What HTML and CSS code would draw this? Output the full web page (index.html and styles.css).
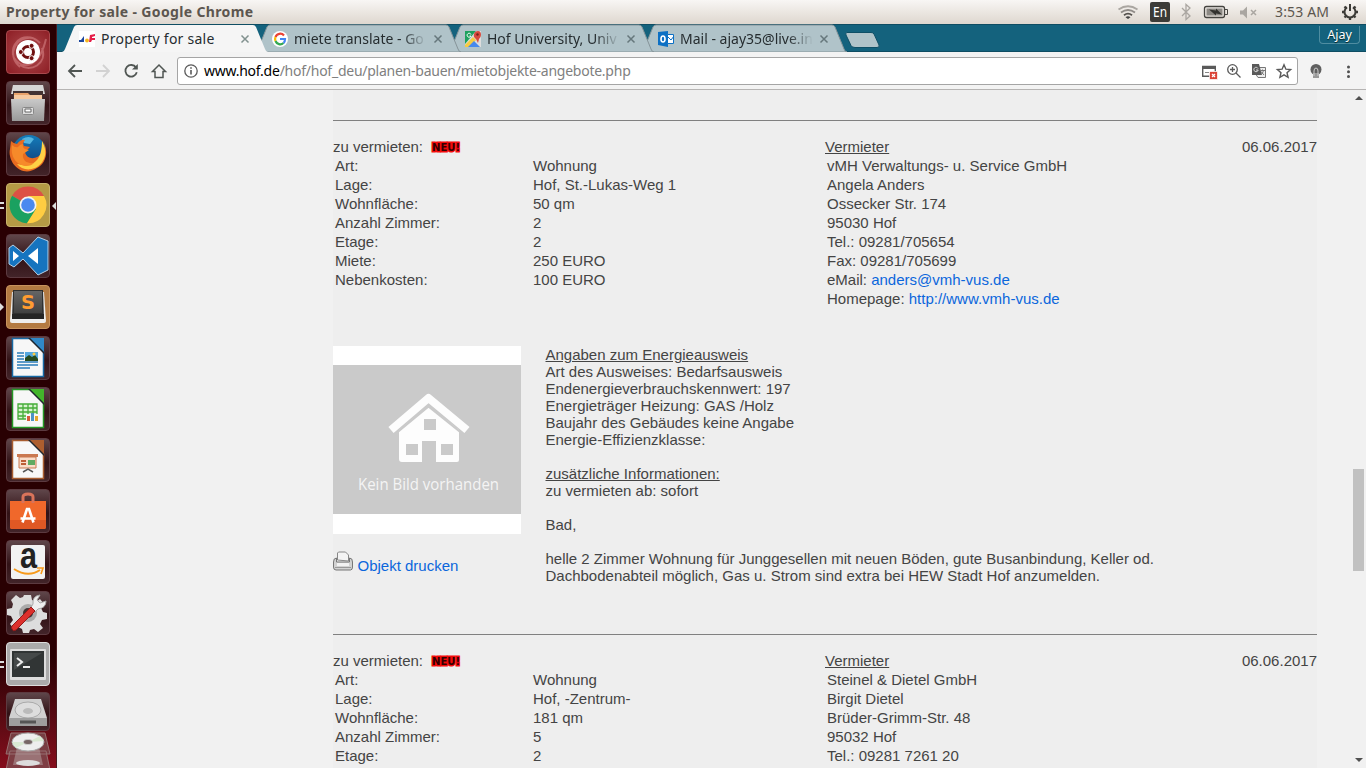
FILE: index.html
```html
<!DOCTYPE html>
<html lang="de">
<head>
<meta charset="utf-8">
<title>Property for sale</title>
<link rel="stylesheet" href="styles.css">
</head>
<body>
<header class="panel">
  <span class="panel-title">Property for sale - Google Chrome</span>
  <svg class="indicators" width="166" height="24" viewBox="1110 0 166 24">
    <g fill="none" stroke-width="1.8">
      <path d="M1118.500 9.500Q1128 3 1137.500 9.500" stroke="#aaa6a1"/><path d="M1121 12.500Q1128 7.500 1135 12.500" stroke="#8f8b87"/><path d="M1124 15.200Q1128 12 1132 15.200" stroke="#55524e"/>
    </g>
    <path d="M1125.500 17.200Q1128 15.500 1130.500 17.200L1128 19Z" fill="#444"/>
    <rect x="1150" y="2" width="20" height="20" rx="2" fill="#3c3b37"/>
    <text class="en" x="1153" y="17" textLength="14" lengthAdjust="spacingAndGlyphs">En</text>
    <path d="M1182 8l8 8-4 3.500V4.500l4 3.500-8 8" fill="none" stroke="#aaa6a1" stroke-width="1.300"/>
    <rect x="1204.500" y="6.500" width="20" height="11" rx="2" fill="none" stroke="#454440" stroke-width="1.300"/><path d="M1225 9.500h2.500v5H1225" fill="none" stroke="#454440"/>
    <rect x="1206.500" y="8.500" width="16" height="7" fill="#8b8883"/><path d="M1209 9.500l7 1 0-2 6 6-6-1v2Z" fill="#33322f"/>
    <path d="M1240 10.500h3l4-4v12l-4-4h-3Z" fill="#aaa6a1"/><path d="M1251 10l5 5m0-5l-5 5" stroke="#aaa6a1" stroke-width="1.500"/>
  </svg>
  <span class="clock">3:53 AM</span>
  <svg class="gear" width="20" height="20" viewBox="0 0 20 20"><g fill="none" stroke="#3c3b37"><path d="M7 5.300a5.500 5.500 0 1 0 6 0" stroke-width="2"/><path d="M10 2v7" stroke-width="2"/><path d="M4.500 4.500l2 2m9-2l-2 2M2 10h3m10 0h3M4.500 15.500l2-2m9 2l-2-2M10 15v3" stroke-width="2.300"/></g></svg>
</header>
<div class="desktop">
  <nav class="launcher">
    <div class="tile dash"><svg viewBox="0 0 44 44"><g fill="none" stroke="#df8f91" stroke-opacity=".5"><path d="M7 25C5 9 22 1 34 13M14 37C-1 24 11 5 27 8M40 9C34 35 18 42 8 28M36 18C42 34 24 43 14 35" stroke-width="2"/></g><circle cx="22" cy="22" r="12" fill="#fff"/><circle cx="22" cy="22" r="5.500" fill="none" stroke="#701010" stroke-width="3"/><g fill="#701010" stroke="#fff"><circle cx="14.800" cy="22" r="2.500"/><circle cx="25.600" cy="15.800" r="2.500"/><circle cx="25.600" cy="28.200" r="2.500"/></g></svg></div>
    <div class="tile"><svg viewBox="0 0 44 44"><path d="M7 4h30l2 9H5Z" fill="#d5d5d5"/><path d="M7 10h30v10H7Z" fill="#433"/><path d="M8 12h14l2 2h12v6H8Z" fill="#e9a26b"/><path d="M8 14h28v4H8Z" fill="#f6c9a0"/><path d="M5 18h34l-1 22H6Z" fill="url(#silver)"/><rect x="16.500" y="26.500" width="11" height="7" rx="1" fill="#ddd" stroke="#888"/><path d="M19 28h6v3h-6Z" fill="#fff" stroke="#666"/></svg></div>
    <div class="tile"><svg viewBox="0 0 44 44"><circle cx="23" cy="20" r="17" fill="url(#sea)"/><path d="M16 7q7-4 12 0l-4 5-6-1Z" fill="#55b5df"/><path d="M5 9Q8 12 11 12q4-5 8-4-3 3-1 6l6 1-5 5c2 9 13 7 17 1q5-7 0-13c7 9 5 23-5 28C15 47 1 29 4 17Z" fill="#e86b20"/><path d="M36 9c7 12 2 23-7 27-7 3-14 1-18-4 15 4 25-2 25-23Z" fill="#ffd145"/><path d="M6 13q3 3 6 2 2-3 5-3-1 3 2 5l4 1-6 4c-1 7 5 10 11 9-6 7-25 2-22-18Z" fill="#f68a2a"/></svg></div>
    <div class="tile chrome"><svg viewBox="0 0 44 44"><path d="M22 22L6.100 12.800A18.300 18.300 0 0 1 38 13H22Z" fill="#dd5144"/><path d="M22 22L6.100 12.800A18.300 18.300 0 0 0 21 40.300L30 26Z" fill="#1aa160"/><path d="M22 13h16A18.300 18.300 0 0 1 21 40.300L30 26Z" fill="#ffcd42"/><circle cx="22" cy="22" r="8.500" fill="#f3f3f3"/><circle cx="22" cy="22" r="6.800" fill="#4a89ef"/></svg><i class="pips"></i><i class="focus"></i></div>
    <div class="tile"><svg viewBox="0 0 44 44"><path d="M3 14l4-3 10 8L32 3l10 4v29l-10 5-15-16-9 8-5-3Z" fill="#1674bf" stroke="#b5d1e8"/><path d="M7 17v10l6-5ZM22 22l10-8v16Z" fill="#fff"/></svg></div>
    <div class="tile sublime"><svg viewBox="0 0 44 44"><path d="M6 7h32l2 29q0 2-2 2H6q-2 0-2-2Z" fill="#eee"/><path d="M7 5h30l1 29H6Z" fill="#303030"/><path d="M8 6h28v22H8Z" fill="url(#key)"/><path d="M6 29h32v5H6Z" fill="#252525"/><text class="s-mark" x="15" y="24" textLength="14" lengthAdjust="spacingAndGlyphs">S</text></svg><i class="arrow"></i></div>
    <div class="tile"><svg viewBox="0 0 44 44"><path d="M6.500 2.500h18l13 13v25h-31Z" fill="#f7f7f7" stroke="#176aa5" stroke-width="1.500"/><path d="M24 2h14v14Z" fill="#3088c7"/><path d="M24 2l14 14V18L22 2Z" fill="#20272f"/><path d="M11 17h7m-7 3h7m-7 3h7m-7 3h21m-21 3h21m-21 3h13" stroke="#2b7dba" stroke-width="1.700"/><path d="M19 16h13v9H19Z" fill="#56a8df"/><path d="M19 22l4-3 3 2 3-2 3 4v2H19Z" fill="#264a1d"/><circle cx="28" cy="18" r="1.500" fill="#ffcc42"/></svg></div>
    <div class="tile"><svg viewBox="0 0 44 44"><path d="M6.500 2.500h18l13 13v25h-31Z" fill="#f7f7f7" stroke="#249825" stroke-width="1.500"/><path d="M24 2h14v14Z" fill="#43b52b"/><path d="M24 2l14 14V18L22 2Z" fill="#20272f"/><path d="M12 17h19v15H12ZM12 21h19m-19 4h19m-19 4h19M17 17v15m5-15v15m5-15v15" fill="#d9f2d1" stroke="#45ad38" stroke-width="1.300"/><path d="M20 27h12v8H20Z" fill="#f7f7f7"/><path d="M21 29h3v5h-3Z" fill="#d75a38"/><path d="M25 26h3v8h-3Z" fill="#4c93c5"/><path d="M29 29h3v5h-3Z" fill="#e5a62d"/></svg></div>
    <div class="tile"><svg viewBox="0 0 44 44"><path d="M6.500 2.500h18l13 13v25h-31Z" fill="#f7f7f7" stroke="#a85d30" stroke-width="1.500"/><path d="M24 2h14v14Z" fill="#ad5e2f"/><path d="M24 2l14 14V18L22 2Z" fill="#20272f"/><path d="M11 16h21v3H11Z" fill="#ca7850"/><path d="M13 19h17v11H13Z" fill="#f9ddca" stroke="#ca7850"/><path d="M15 23h5m-5 3h5" stroke="#be5d35" stroke-width="2"/><path d="M22 22h7v5h-7Z" fill="#5faa62"/><path d="M17 34l5-3 5 3" fill="none" stroke="#555" stroke-width="1.500"/></svg></div>
    <div class="tile"><svg viewBox="0 0 44 44"><path d="M4 12h36v26q0 2-2 2H6q-2 0-2-2Z" fill="#f0682b"/><path d="M4 31h36v7q0 2-2 2H6q-2 0-2-2Z" fill="#df5824"/><path d="M17 14V8q0-3 5-3t5 3v6" fill="none" stroke="#d9735a" stroke-width="3"/><path d="M16.500 33.500L21 20h2l4.500 13.500M14.500 29.500h15" fill="none" stroke="#fff" stroke-width="2.600"/></svg></div>
    <div class="tile"><svg viewBox="0 0 44 44"><rect x="5" y="5" width="34" height="34" rx="2" fill="#f2f2f2"/><text class="a-mark" x="14" y="28" textLength="17" lengthAdjust="spacingAndGlyphs">a</text><path d="M8 29q14 9 26 1" fill="none" stroke="#f79a1b" stroke-width="2"/><path d="M31 28h6l-2 6" fill="none" stroke="#f79a1b" stroke-width="1.600"/></svg></div>
    <div class="tile"><svg viewBox="0 0 44 44"><path d="M18 4h7l1 5 4 2 4-3 4 5-3 4 2 4 4 1v6l-5 1-2 4 3 4-5 4-4-3-4 1-1 3h-6l-1-4-4-2-4 2-4-5 3-4-2-4-4-1v-6l5-1 1-4-2-4 5-5 4 3 3-1Z" fill="#ddd"/><circle cx="22" cy="22" r="9" fill="#aaa"/><circle cx="22" cy="22" r="5" fill="#433"/><path d="M24 18l3-5q-1-8 7-9l-3 5 3 3 6-2q0 7-8 8l-3 3Z" fill="#eee" stroke="#aaa"/><path d="M6 35L25 16l4 4L10 39q-3 2-4-1-1-1 0-3Z" fill="#dc302c" stroke="#941a1a"/></svg></div>
    <div class="tile terminal"><svg viewBox="0 0 44 44"><rect x="4" y="7" width="36" height="31" rx="1" fill="#ddd"/><rect x="6" y="9" width="32" height="26" fill="#313535"/><path d="M8 11h28L8 28Z" fill="#454949"/><path d="M11 16l5 4-5 4M17 25h7" fill="none" stroke="#eee" stroke-width="2"/></svg><i class="pips"></i></div>
    <div class="tile drive"><svg viewBox="0 0 44 39"><path d="M9 7h26l6 19H3Z" fill="#d0d0d0"/><ellipse cx="22" cy="18" rx="13" ry="8" fill="#ddd" stroke="#aaa"/><ellipse cx="22" cy="19" rx="5" ry="3" fill="#bbb"/><path d="M3 26h38v8H3Z" fill="#9e9e9e"/><path d="M14 30h16" stroke="#555" stroke-width="3"/></svg></div>
    <div class="disc"><svg viewBox="0 0 46 41"><path d="M6 4h34l5 21H1ZM5 22h36l4 19H1Z" fill="#7d5355" fill-opacity=".7" stroke="#966f70"/><path d="M12 18h22l4 18H8Z" fill="#b8a7a7" fill-opacity=".5"/><ellipse cx="23" cy="13" rx="16" ry="9" fill="#eee" stroke="#aaa"/><path d="M23 13l12-6 4 5ZM23 13L11 19l-4-6Z" fill="#d9e8d2"/><ellipse cx="23" cy="13" rx="4.500" ry="2.500" fill="#766" stroke="#ccc"/><ellipse cx="23" cy="34" rx="12" ry="3" fill="#ddd"/></svg></div>
    <svg class="defs" width="0" height="0"><defs><linearGradient id="silver" x2="0" y2="1"><stop stop-color="#c9c9c9"/><stop offset="1" stop-color="#999"/></linearGradient><linearGradient id="sea" x2="0" y2="1"><stop stop-color="#147dbb"/><stop offset="1" stop-color="#123974"/></linearGradient><linearGradient id="key" x2="0" y2="1"><stop stop-color="#656565"/><stop offset="1" stop-color="#414141"/></linearGradient></defs></svg>
  </nav>
  <main class="browser">
    <div class="tabs">
      <div class="tab active"><svg class="shape" viewBox="0 0 206 28"><path class="tab-fill" d="M0 28Q2 28 3 25L12 3Q13 1 15 1H191Q193 1 194 3L203 25Q204 28 206 28Z"/></svg><svg class="favicon" viewBox="0 0 16 16"><path fill="#fff" d="M0 0h16v16H0Z"/><path d="M0 9h2l3-4v6H0Z" fill="#1c469e"/><circle cx="8" cy="9.500" r="1.900" fill="#f6b51d"/><path d="M11 4l5-1v2l-3 1v1h3v2h-3l-1 2h-2Z" fill="#e51e48"/></svg><span class="label l1">Property for sale</span><svg class="close" viewBox="0 0 10 10"><path d="M1.500 1.500l7 7m0-7l-7 7"/></svg></div>
      <div class="tab"><svg class="shape" viewBox="0 0 206 28"><path class="tab-fill" d="M0 28Q2 28 3 25L12 3Q13 1 15 1H191Q193 1 194 3L203 25Q204 28 206 28Z"/></svg><svg class="favicon" viewBox="0 0 16 16"><circle cx="8" cy="8" r="8" fill="#fff"/><g fill="none" stroke-width="2.200"><path d="M12 4.500A5 5 0 0 0 3.500 6" stroke="#ea4335"/><path d="M3.500 6a5 5 0 0 0 0 4" stroke="#fbbc05"/><path d="M3.500 10a5 5 0 0 0 8 2" stroke="#34a853"/><path d="M11.500 12Q13 11 13 8H8" stroke="#4285f4"/></g></svg><span class="label l2">miete translate - Go</span><svg class="close" viewBox="0 0 10 10"><path d="M1.500 1.500l7 7m0-7l-7 7"/></svg></div>
      <div class="tab"><svg class="shape" viewBox="0 0 206 28"><path class="tab-fill" d="M0 28Q2 28 3 25L12 3Q13 1 15 1H191Q193 1 194 3L203 25Q204 28 206 28Z"/></svg><svg class="favicon" viewBox="0 0 16 16"><path d="M0 0h16v16H0Z" fill="#ddd"/><path d="M0 0h11L0 13Z" fill="#1ca15f"/><path d="M0 14L8 6l3 3-6 7H0Z" fill="#f7cb42"/><path d="M3 16l6-6 6 6Z" fill="#4789ed"/><path d="M9 3q1-3 4-3t3 4q0 2-2 4l-1 4-2-4Q8 6 9 3Z" fill="#d84a3e"/><circle cx="12.500" cy="3.500" r="1.200" fill="#76231c"/><path d="M6 3.500A2 2 0 1 0 6 5H4.500" fill="none" stroke="#fff"/></svg><span class="label l3">Hof University, Univ</span><svg class="close" viewBox="0 0 10 10"><path d="M1.500 1.500l7 7m0-7l-7 7"/></svg></div>
      <div class="tab"><svg class="shape" viewBox="0 0 206 28"><path class="tab-fill" d="M0 28Q2 28 3 25L12 3Q13 1 15 1H191Q193 1 194 3L203 25Q204 28 206 28Z"/></svg><svg class="favicon" viewBox="0 0 16 16"><path d="M0 1l10-1v16L0 14Z" fill="#0c70c4"/><ellipse cx="5" cy="8" rx="2" ry="3" fill="none" stroke="#fff" stroke-width="1.600"/><path d="M9.500 3.500h6v9h-6Z" fill="#fff" stroke="#0c70c4"/><path d="M10 6l3 3 3-4" fill="none" stroke="#0c70c4"/></svg><span class="label l4">Mail - ajay35@live.in</span><svg class="close" viewBox="0 0 10 10"><path d="M1.500 1.500l7 7m0-7l-7 7"/></svg></div>
      <svg class="newtab" width="36" height="18" viewBox="0 0 36 18"><path d="M2 1.500H26Q28 1.500 29 3L34 14Q35 16.500 32 16.500H10Q7 16.500 6 14.500L1 4Q0 2 2 1.500Z" fill="#b0c3c9" stroke="#0f4f66"/></svg>
      <span class="user">Ajay</span>
    </div>
    <div class="toolbar">
      <svg class="nav" width="120" height="37" viewBox="57 52 120 37" fill="none" stroke="#505653" stroke-width="1.800"><path d="M82 71H69m6-6l-6 6 6 6"/><path d="M96 71h13m-6-6l6 6-6 6" stroke="#d2d2d2"/><path d="M136 67.500a5.800 5.800 0 1 0 .8 4.800"/><path d="M132 69.500h5.800V64Z" fill="#505653" stroke="none"/><path d="M155 71.500h-2.500l6.500-6.500 6.500 6.500H163v6h-8Z" stroke-width="1.500"/></svg>
      <div class="omnibox"><svg width="16" height="16" viewBox="0 0 16 16" fill="none" stroke="#5a5a5a"><circle cx="8" cy="8" r="6.200" stroke-width="1.300"/><path d="M8 7v4.500M8 4.200v1.600" stroke-width="1.600"/></svg><span class="url"><b>www.hof.de</b>/hof/hof_deu/planen-bauen/mietobjekte-angebote.php</span>
        <svg class="actions" width="98" height="26" viewBox="1199 58 98 26"><path d="M1202.700 66.500h12.600v9.800h-12.600Z" fill="none" stroke="#5a5a5a" stroke-width="1.400"/><path d="M1202 66h14v3h-14Z" fill="#5a5a5a"/><path d="M1205 72.500h4" stroke="#888"/><rect x="1209.500" y="71.500" width="8" height="8" fill="#db4437" stroke="#fff" stroke-width=".7"/><path d="M1212 74l3 3m0-3l-3 3" stroke="#fff" stroke-width="1.200"/><circle cx="1232.500" cy="69.500" r="4.800" fill="none" stroke="#5a5a5a" stroke-width="1.300"/><path d="M1236 73l4.500 4.500M1230 69.500h5m-2.500-2.500v5" stroke="#5a5a5a" stroke-width="1.300"/><path d="M1257 67.500h8.500v10H1258l-2-3" fill="#eee" stroke="#777"/><path d="M1252 64h7l3 11h-10Z" fill="#5a5a5a"/><path d="M1258 68.500a2.200 2.200 0 1 0 .2 1.500H1256" fill="none" stroke="#ddd"/><path d="M1260.500 70.500h4.500m-2.500-1v1m1 0q-1 3-2 4m-.5-3 3 3.500" fill="none" stroke="#777"/><path d="M1284 64.800l1.900 4.400 4.700.4-3.600 3.100 1.100 4.700-4.100-2.500-4.100 2.500 1.100-4.700-3.600-3.100 4.700-.4Z" fill="none" stroke="#5a5a5a" stroke-width="1.400"/></svg>
      </div>
      <svg class="extras" width="68" height="37" viewBox="1298 52 68 37"><circle cx="1316" cy="69.500" r="5.500" fill="#606060"/><path d="M1313 73h6v5h-6Z" fill="#999"/><path d="M1314 76v-5q0-3 2-3t2 3v5" fill="none" stroke="#ccc"/><g fill="#505050"><circle cx="1348.500" cy="67" r="1.500"/><circle cx="1348.500" cy="71.700" r="1.500"/><circle cx="1348.500" cy="76.500" r="1.500"/></g></svg>
    </div>
    <div class="viewport">
      <div class="page">
        <section class="listing first">
          <div class="facts">
            <div class="offer"><p class="head">zu vermieten: <svg class="new" width="30" height="13" viewBox="0 0 30 13"><text x="1" y="9.500" textLength="28" lengthAdjust="spacingAndGlyphs">NEU!</text></svg></p>
              <dl><dt>Art:</dt><dd>Wohnung</dd><dt>Lage:</dt><dd>Hof, St.-Lukas-Weg 1</dd><dt>Wohnfläche:</dt><dd>50 qm</dd><dt>Anzahl Zimmer:</dt><dd>2</dd><dt>Etage:</dt><dd>2</dd><dt>Miete:</dt><dd>250 EURO</dd><dt>Nebenkosten:</dt><dd>100 EURO</dd></dl></div>
            <div class="landlord"><p class="head"><u>Vermieter</u><span>06.06.2017</span></p><div class="contact">vMH Verwaltungs- u. Service GmbH<br>Angela Anders<br>Ossecker Str. 174<br>95030 Hof<br>Tel.: 09281/705654<br>Fax: 09281/705699<br>eMail: <a>anders@vmh-vus.de</a><br>Homepage: <a>http://www.vmh-vus.de</a></div></div>
          </div>
          <div class="details">
            <div class="media">
              <svg class="placeholder" width="188" height="188" viewBox="0 0 188 188"><path fill="#fff" d="M0 0h188v188H0Z"/><path fill="#cacaca" d="M0 19h188v149H0Z"/><path d="M58 84L95.500 52 134 84" fill="none" stroke="#fdfdfd" stroke-width="8" stroke-linejoin="round"/><path d="M66 84L95.500 60 126 84v30q0 2-2 2h-21V95H89v21H69q-3 0-3-3Z" fill="#fdfdfd"/><path d="M61 89L95.500 60.500 131 89" fill="none" stroke="#cacaca" stroke-width="2.200"/><path d="M91 73h12v11H91ZM73 98h12v11H73ZM108 98h12v11h-12Z" fill="#cacaca"/><text x="25" y="144" textLength="141" lengthAdjust="spacingAndGlyphs">Kein Bild vorhanden</text></svg>
              <a class="print"><svg width="21" height="21" viewBox="0 0 21 21"><path d="M4.500 9V2l1-1h7l3 3v6Z" fill="#f4f4f4" stroke="#888"/><path d="M.5 11q0-4 3-4v4h13V7q3 0 3 4v5q0 3-2 3H3q-2.500 0-2.500-3Z" fill="#d2d2d2" stroke="#777"/><path d="M4 12h12v3H4Z" fill="#f2f2f2"/><path d="M2 16.500h16" stroke="#999"/></svg>Objekt drucken</a>
            </div>
            <div class="copy"><u>Angaben zum Energieausweis</u><br>Art des Ausweises: Bedarfsausweis<br>Endenergieverbrauchskennwert: 197<br>Energieträger Heizung: GAS /Holz<br>Baujahr des Gebäudes keine Angabe<br>Energie-Effizienzklasse:<br><br><u>zusätzliche Informationen:</u><br>zu vermieten ab: sofort<br><br>Bad,<br><br>helle 2 Zimmer Wohnung für Junggesellen mit neuen Böden, gute Busanbindung, Keller od.<br>Dachbodenabteil möglich, Gas u. Strom sind extra bei HEW Stadt Hof anzumelden.</div>
          </div>
        </section>
        <section class="listing">
          <div class="facts">
            <div class="offer"><p class="head">zu vermieten: <svg class="new" width="30" height="13" viewBox="0 0 30 13"><text x="1" y="9.500" textLength="28" lengthAdjust="spacingAndGlyphs">NEU!</text></svg></p>
              <dl><dt>Art:</dt><dd>Wohnung</dd><dt>Lage:</dt><dd>Hof, -Zentrum-</dd><dt>Wohnfläche:</dt><dd>181 qm</dd><dt>Anzahl Zimmer:</dt><dd>5</dd><dt>Etage:</dt><dd>2</dd></dl></div>
            <div class="landlord"><p class="head"><u>Vermieter</u><span>06.06.2017</span></p><div class="contact">Steinel &amp; Dietel GmbH<br>Birgit Dietel<br>Brüder-Grimm-Str. 48<br>95032 Hof<br>Tel.: 09281 7261 20</div></div>
          </div>
        </section>
      </div>
      <div class="scrollbar"><i class="up"></i><div class="track"><div class="thumb"></div></div><i class="down"></i></div>
    </div>
  </main>
</div>
</body>
</html>
```
FILE: styles.css
```css
* { box-sizing: border-box; }
body { margin: 0; width: 1366px; height: 768px; overflow: hidden; display: flex; flex-direction: column; font-family: "Noto Sans", sans-serif; }
svg { display: block; flex: none; }
p, dl, dd { margin: 0; }
.panel { height: 24px; flex: none; display: flex; align-items: center; padding: 0 6px; background: linear-gradient(#f8f6f4, #ded7cf); color: #5c564f; }
.panel-title { flex: 1; font-size: 14px; font-weight: 700; line-height: 24px; white-space: nowrap; letter-spacing: .35px; }
.en { font: 14px "Noto Sans", sans-serif; fill: #fff; }
.clock { width: 62px; font-size: 14px; line-height: 24px; letter-spacing: .15px; white-space: nowrap; }
.indicators { margin-right: -1px; }
.gear { margin-left: 3px; }
.desktop { display: flex; flex: 1; min-height: 0; }
.launcher { width: 57px; flex: none; padding: 6px 7px 0 6px; display: flex; flex-direction: column; gap: 7px; border-right: 1px solid #4a1a1e; background: linear-gradient(#290002, #290002 85%, #5d0b14 94%, #850d1b); }
.tile { position: relative; width: 44px; height: 44px; flex: none; border: 1px solid #5c3a40; border-radius: 4px; background: linear-gradient(#5f464a, #321216 55%, #422429); }
.tile > svg { width: 44px; height: 44px; margin: -1px; }
.dash { background: radial-gradient(#b04d50, #8d1e25); border-color: #a9484c; }
.chrome { background: #b59a45; border-color: #c8b36c; }
.sublime { background: #b37a42; border-color: #c8935e; }
.terminal { background: #aaa; border-color: #ddd; }
.drive { height: 39px; margin-top: -1px; }
.drive > svg { height: 39px; }
.disc { margin: -9px 0 0 -1px; position: relative; }
.disc svg { width: 46px; height: 41px; }
.pips { position: absolute; left: -7px; top: 18px; width: 4px; height: 7px; border: solid #ddd; border-width: 2px 0; }
.focus { position: absolute; right: -7px; top: 18px; border: solid transparent; border-width: 4px 4px 4px 0; border-right-color: #ddd; }
.arrow { position: absolute; left: -7px; top: 17px; border: solid transparent; border-width: 4px 0 4px 4px; border-left-color: #ddd; }
.s-mark { font: 700 19px "DejaVu Sans", sans-serif; fill: #ff9c31; }
.a-mark { font: 700 36px "Liberation Sans", sans-serif; fill: #222; }
.browser { flex: 1; min-width: 0; display: flex; flex-direction: column; }
.tabs { height: 28px; flex: none; display: flex; background: #14627d; padding-left: 5px; box-shadow: inset 0 1px #0f4d63, inset 0 -1px #0f4d63; }
.tab { position: relative; width: 206px; height: 28px; flex: none; margin-right: -13px; padding: 1px 18px 0 17px; display: flex; align-items: center; }
.tab:nth-child(1) { z-index: 4; }
.tab:nth-child(2) { z-index: 3; }
.tab:nth-child(3) { z-index: 2; }
.shape { position: absolute; left: 0; top: 0; width: 206px; height: 28px; }
.tab-fill { fill: #b0c3c9; stroke: #869499; stroke-width: 1; }
.active .tab-fill { fill: #f5f5f5; stroke: none; }
.favicon { position: relative; width: 16px; height: 16px; }
.label { position: relative; width: 137px; margin-left: 6px; font-size: 14px; line-height: 25px; white-space: nowrap; color: #262d30; -webkit-mask-image: linear-gradient(90deg, #000 108px, transparent 133px); }
.l1 { -webkit-mask-image: none; letter-spacing: .25px; }
.close { position: relative; width: 10px; height: 10px; margin-left: 3px; fill: none; stroke: #66777c; stroke-width: 1.5; }
.active .close { stroke: #81918f; }
.newtab { margin: 7px 0 0 11px; }
.user { margin: 2px 6px 0 auto; width: 41px; height: 18px; text-align: center; color: #fff; font-size: 12.5px; line-height: 18px; border: 1px solid #4f8da1; border-top: 0; border-radius: 0 0 4px 4px; text-shadow: 0 1px 1px #022; }
.toolbar { height: 38px; flex: none; display: flex; align-items: center; background: #f3f3f3; border-bottom: 1px solid #b6b4b3; }
.omnibox { width: 1121px; height: 28px; margin-top: 1px; padding-left: 5px; display: flex; align-items: center; background: #fff; border: 1px solid #a5a5a5; border-radius: 3px; }
.url { flex: 1; margin-left: 5px; font-size: 14px; line-height: 24px; color: #808080; letter-spacing: -.25px; white-space: nowrap; }
.url b { color: #000; font-weight: 400; }
.viewport { flex: 1; min-height: 0; display: flex; overflow: hidden; background: #f1f1f1; font: 15px/17px "Liberation Sans", Arial, sans-serif; color: #444; }
.page { width: 984px; height: 678px; overflow: hidden; margin-left: 276px; background: #eee; }
.listing { height: 514px; border-top: 1px solid #808080; padding-top: 16px; }
.first { margin-top: 30px; }
.facts { height: 209px; display: flex; }
.offer { width: 492px; }
.head { height: 19px; line-height: 19px; display: flex; }
.new { margin: 4px 0 0 8px; overflow: visible; }
.new text { font: 700 11px "DejaVu Sans", sans-serif; fill: #300; stroke: #f20a0a; stroke-width: 3px; paint-order: stroke; }
dl { display: grid; grid-template-columns: 198px 1fr; line-height: 19px; padding-left: 2px; }
.landlord { flex: 1; }
.landlord .head { justify-content: space-between; }
.contact { padding-left: 2px; line-height: 19px; }
a { color: #0b66dc; }
.details { display: flex; gap: 24.5px; }
.media { width: 188px; flex: none; }
.placeholder text { font: 400 16px "Open Sans", sans-serif; fill: #f4f4f4; }
.print { display: flex; gap: 3.5px; margin-top: 17px; line-height: 30px; height: 24px; white-space: nowrap; }
.copy { white-space: nowrap; }
.scrollbar { width: 15px; margin-left: auto; background: #f1f1f1; display: flex; flex-direction: column; align-items: center; padding: 6px 0; }
.up, .down { border: 4px solid transparent; border-top: 0; border-bottom: 4px solid #505050; }
.down { border-top: 4px solid #505050; border-bottom: 0; }
.track { flex: 1; padding-top: 369px; }
.thumb { width: 11px; height: 102px; background: #c1c1c1; }
```
